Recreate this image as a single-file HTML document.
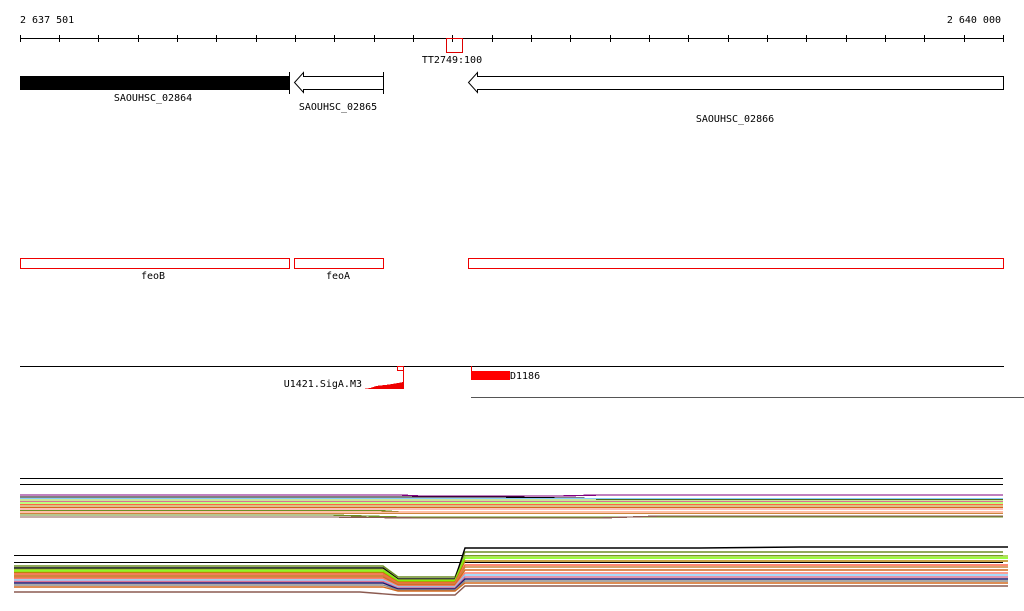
<!DOCTYPE html>
<html><head><meta charset="utf-8"><style>
html,body{margin:0;padding:0;background:#fff;width:1024px;height:611px;overflow:hidden}
svg{display:block}
text{font-family:"DejaVu Sans Mono","Liberation Mono",monospace;font-size:10px;fill:#000}
</style></head><body>
<svg width="1024" height="611" viewBox="0 0 1024 611" shape-rendering="crispEdges">
<text x="20" y="23">2 637 501</text>
<text x="1001" y="23" text-anchor="end">2 640 000</text>
<line x1="20" y1="38.5" x2="1004" y2="38.5" stroke="#000"/>
<g stroke="#000">
<line x1="20.5" y1="35" x2="20.5" y2="42"/><line x1="59.5" y1="35" x2="59.5" y2="42"/><line x1="98.5" y1="35" x2="98.5" y2="42"/><line x1="138.5" y1="35" x2="138.5" y2="42"/><line x1="177.5" y1="35" x2="177.5" y2="42"/><line x1="216.5" y1="35" x2="216.5" y2="42"/><line x1="256.5" y1="35" x2="256.5" y2="42"/><line x1="295.5" y1="35" x2="295.5" y2="42"/><line x1="334.5" y1="35" x2="334.5" y2="42"/><line x1="374.5" y1="35" x2="374.5" y2="42"/><line x1="413.5" y1="35" x2="413.5" y2="42"/><line x1="452.5" y1="35" x2="452.5" y2="42"/><line x1="492.5" y1="35" x2="492.5" y2="42"/><line x1="531.5" y1="35" x2="531.5" y2="42"/><line x1="570.5" y1="35" x2="570.5" y2="42"/><line x1="610.5" y1="35" x2="610.5" y2="42"/><line x1="649.5" y1="35" x2="649.5" y2="42"/><line x1="688.5" y1="35" x2="688.5" y2="42"/><line x1="728.5" y1="35" x2="728.5" y2="42"/><line x1="767.5" y1="35" x2="767.5" y2="42"/><line x1="806.5" y1="35" x2="806.5" y2="42"/><line x1="846.5" y1="35" x2="846.5" y2="42"/><line x1="885.5" y1="35" x2="885.5" y2="42"/><line x1="924.5" y1="35" x2="924.5" y2="42"/><line x1="964.5" y1="35" x2="964.5" y2="42"/><line x1="1003.5" y1="35" x2="1003.5" y2="42"/>
</g>
<rect x="446.5" y="38.5" width="16" height="14" fill="none" stroke="#d00"/>
<text x="452" y="63" text-anchor="middle">TT2749:100</text>

<rect x="20" y="76" width="269" height="14" fill="#000"/>
<text x="153" y="101" text-anchor="middle">SAOUHSC_02864</text>
<line x1="289.5" y1="72" x2="289.5" y2="94" stroke="#000"/>
<path d="M383.5 76.5 H303.5 V72.5 L294.5 82.5 L303.5 92.5 V89.5 H383.5" fill="#fff" stroke="#000" shape-rendering="auto"/>
<line x1="383.5" y1="72" x2="383.5" y2="94" stroke="#000"/>
<text x="338" y="110" text-anchor="middle">SAOUHSC_02865</text>
<path d="M1003.5 76.5 H477.5 V72.5 L468.5 82.5 L477.5 92.5 V89.5 H1003.5 Z" fill="#fff" stroke="#000" shape-rendering="auto"/>
<text x="735" y="122" text-anchor="middle">SAOUHSC_02866</text>

<g fill="none" stroke="#e00">
<rect x="20.5" y="258.5" width="269" height="10"/>
<rect x="294.5" y="258.5" width="89" height="10"/>
<rect x="468.5" y="258.5" width="535" height="10"/>
</g>
<text x="153" y="279" text-anchor="middle">feoB</text>
<text x="338" y="279" text-anchor="middle">feoA</text>

<line x1="20" y1="366.5" x2="1004" y2="366.5" stroke="#000"/>
<rect x="397.5" y="366.5" width="6" height="4" fill="none" stroke="#e00"/>
<line x1="403.5" y1="366" x2="403.5" y2="389" stroke="#e00"/>
<path d="M363 389 L370 388 L376 386 L385 385 L392 384 L398 383 L403 382 L404 389 Z" fill="#e00"/>
<text x="362" y="387" text-anchor="end">U1421.SigA.M3</text>
<line x1="471.5" y1="366" x2="471.5" y2="380" stroke="#e00"/>
<rect x="471" y="371" width="39" height="9" fill="#f00"/>
<text x="510" y="379">D1186</text>
<line x1="471" y1="397.5" x2="1024" y2="397.5" stroke="#555"/>

<line x1="20" y1="478.5" x2="1003" y2="478.5" stroke="#000"/>
<line x1="20" y1="484.5" x2="1003" y2="484.5" stroke="#000"/>
<g fill="none" stroke-width="1.3">
<path d="M20 495 H400 L420 496 H560 L600 495 H1003" stroke="#800080"/>
<path d="M20 497 H500 L620 499 H1003" stroke="#000"/>
<path d="M20 498.5 H1003" stroke="#87cefa"/>
<path d="M20 500 H1003" stroke="#9acd32"/>
<path d="M20 501.5 H1003" stroke="#db7093"/>
<path d="M20 503 H1003" stroke="#7cfc00"/>
<path d="M20 504.5 H1003" stroke="#ff6347"/>
<path d="M20 506 H1003" stroke="#b8860b"/>
<path d="M20 507.5 H1003" stroke="#d2691e"/>
<path d="M20 509 H1003" stroke="#fa8072"/>
<path d="M20 510.5 H380 L400 512 H1003" stroke="#6b8e23"/>
<path d="M20 512 H1003" stroke="#ff7f50"/>
<path d="M20 513.5 H1003" stroke="#cd853f"/>
<path d="M20 515 H330 L400 517 H1003" stroke="#6b8e23"/>
<path d="M20 517 H330 L420 518 H600 L660 516 H1003" stroke="#8b5a50"/>
</g>

<line x1="14" y1="555.5" x2="1003" y2="555.5" stroke="#000"/>
<line x1="14" y1="562.5" x2="1003" y2="562.5" stroke="#000"/>
<g fill="none" stroke-width="1.4" shape-rendering="auto">
<path d="M14 566 H383 L398 577 H455 L465 552 H1003" stroke="#6b8e23"/>
<path d="M14 568 H383 L398 579 H455 L465 548 H700 L800 547 H1008" stroke="#000"/>
<path d="M14 569.5 H383 L398 580 H455 L465 556 H1008" stroke="#9acd32"/>
<path d="M14 571 H383 L398 581 H455 L465 558 H1008" stroke="#7cfc00"/>
<path d="M14 572.5 H383 L398 582 H455 L465 561 H1008" stroke="#b8860b"/>
<path d="M14 574 H383 L398 583 H455 L465 565 H1008" stroke="#ff6347"/>
<path d="M14 575.5 H383 L398 584 H455 L465 567 H1008" stroke="#cd853f"/>
<path d="M14 577 H383 L398 585 H455 L465 570 H1008" stroke="#d2691e"/>
<path d="M14 578.5 H383 L398 586 H455 L465 573 H1008" stroke="#fa8072"/>
<path d="M14 580 H383 L398 587 H455 L465 575 H1008" stroke="#87cefa"/>
<path d="M14 581.5 H383 L398 588 H455 L465 577 H1008" stroke="#db7093"/>
<path d="M14 583 H383 L398 589 H455 L465 579 H1008" stroke="#191970"/>
<path d="M14 585 H383 L398 590 H455 L465 581 H1008" stroke="#8b8b8b"/>
<path d="M14 587 H383 L398 591 H455 L465 583 H1008" stroke="#d2691e"/>
<path d="M14 592 H360 L398 595 H455 L465 586 H1008" stroke="#8b5a50"/>
</g>
</svg>
</body></html>
